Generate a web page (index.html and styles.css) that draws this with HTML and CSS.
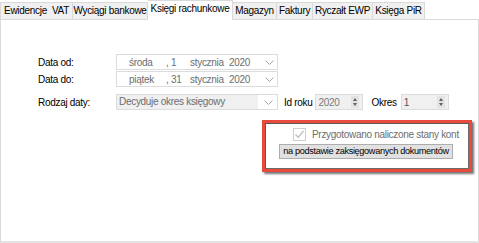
FILE: index.html
```html
<!DOCTYPE html>
<html lang="pl">

<head>
  <meta charset="UTF-8">
  <meta name="viewport" content="width=device-width, initial-scale=1.0">
  <title>Księgi rachunkowe</title>
  <link rel="stylesheet" href="styles.css">
</head>

<body>
  <div class="tabs">
    <div class="tab t1">Ewidencje&nbsp; VAT</div>
    <div class="tab t2">Wyciągi bankowe</div>
    <div class="tab active t3">Księgi rachunkowe</div>
    <div class="tab t4">Magazyn</div>
    <div class="tab t5">Faktury</div>
    <div class="tab t6">Ryczałt EWP</div>
    <div class="tab t7">Księga PiR</div>
  </div>

  <div class="panel">
    <div class="row">
      <span class="label">Data od:</span>
      <div class="date">
        <span class="wd">środa</span>
        <span class="dn">, 1</span>
        <span class="mn">stycznia</span>
        <span class="yr">2020</span>
        <svg class="chev" width="9" height="5" viewBox="0 0 9 5"><polyline points="0.5,0.5 4.5,4.5 8.5,0.5" fill="none" stroke="#a6a6a6" stroke-width="1"/></svg>
      </div>
    </div>
    <div class="row r2">
      <span class="label">Data do:</span>
      <div class="date">
        <span class="wd">piątek</span>
        <span class="dn">, 31</span>
        <span class="mn">stycznia</span>
        <span class="yr">2020</span>
        <svg class="chev" width="9" height="5" viewBox="0 0 9 5"><polyline points="0.5,0.5 4.5,4.5 8.5,0.5" fill="none" stroke="#a6a6a6" stroke-width="1"/></svg>
      </div>
    </div>
    <div class="row r3">
      <span class="label">Rodzaj daty:</span>
      <div class="select">
        <span class="sel-text">Decyduje okres księgowy</span>
        <svg class="chev" width="9" height="5" viewBox="0 0 9 5"><polyline points="0.5,0.5 4.5,4.5 8.5,0.5" fill="none" stroke="#a6a6a6" stroke-width="1"/></svg>
      </div>
      <span class="lbl-small">Id roku</span>
      <div class="spin s-year">
        <span class="val">2020</span>
        <span class="arrows"><i class="up"></i><i class="down"></i></span>
      </div>
      <span class="lbl-small okres">Okres</span>
      <div class="spin s-per">
        <span class="val">1</span>
        <span class="arrows"><i class="up"></i><i class="down"></i></span>
      </div>
    </div>

    <div class="mark">
      <div class="check-row">
        <span class="cb">
          <svg width="11" height="11" viewBox="0 0 11 11"><polyline points="1.5,5.5 4.2,8.3 9.5,2" fill="none" stroke="#bdbdbd" stroke-width="1.3"/></svg>
        </span>
        <span class="cb-text">Przygotowano naliczone stany kont</span>
      </div>
      <div class="btn">na podstawie zaksięgowanych dokumentów</div>
    </div>
  </div>
</body>

</html>
```

FILE: styles.css
```css
body {
  margin: 0;
  background: #fff;
  font-family: "Liberation Sans", Arial, sans-serif;
  font-size: 10px;
  letter-spacing: -0.3px;
  color: #000;
}

.tabs {
  display: flex;
  height: 19px;
  align-items: flex-end;
}

.tab {
  box-sizing: border-box;
  height: 17px;
  line-height: 15px;
  background: #f0f0f0;
  border: 1px solid #d9d9d9;
  border-bottom: none;
  border-left: none;
  text-align: center;
  white-space: nowrap;
}

.t1 { width: 73px; border-left: 1px solid #d9d9d9; }
.t2 { width: 75px; }
.t3 { width: 85px; }
.t4 { width: 44px; }
.t5 { width: 36px; }
.t6 { width: 60px; }
.t7 { width: 52px; }

.tab.active {
  height: 20px;
  margin-bottom: -1px;
  background: #fff;
  line-height: 16px;
  position: relative;
  z-index: 1;
}

.panel {
  box-sizing: border-box;
  height: 224px;
  width: 479px;
  border: 1px solid #dadada;
  border-bottom: 2px solid #e3e3e3;
  padding-top: 34px;
}

.row {
  display: flex;
  align-items: center;
  height: 16px;
}

.r2 {
  margin-top: 1px;
}

.r3 {
  margin-top: 7px;
}

.label {
  width: 78px;
  padding-left: 37px;
  color: #000;
}

.date {
  box-sizing: border-box;
  display: flex;
  align-items: center;
  width: 162px;
  height: 16px;
  border: 1px solid #dcdcdc;
  padding-left: 12px;
  color: #6d6d6d;
}

.wd { width: 37px; }
.dn { width: 24px; }
.mn { width: 39px; }
.yr { width: 36px; }

.chev {
  display: block;
}

.select {
  box-sizing: border-box;
  display: flex;
  align-items: center;
  width: 162px;
  height: 16px;
  border: 1px solid #dcdcdc;
  color: #6d6d6d;
}

.sel-text {
  box-sizing: border-box;
  width: 141px;
  height: 14px;
  line-height: 14px;
  padding-left: 2px;
  background: #f0f0f0;
  margin-right: 6px;
}

.lbl-small {
  margin-left: 6px;
  margin-right: 3px;
}

.okres {
  margin-left: 8px;
  margin-right: 4px;
}

.spin {
  box-sizing: border-box;
  display: flex;
  align-items: center;
  height: 16px;
  border: 1px solid #dcdcdc;
  background: #f0f0f0;
  color: #7a7a7a;
  padding-left: 2px;
}

.s-year {
  width: 48px;
}

.s-per {
  width: 48px;
  color: #555;
}

.val {
  flex: 1;
}

.arrows {
  display: flex;
  flex-direction: column;
  justify-content: center;
  align-items: center;
  gap: 2px;
  width: 8px;
  height: 12px;
  margin-right: 3px;
  background: #e3e3e3;
}

.arrows i {
  display: block;
  width: 0;
  height: 0;
  border-left: 2.5px solid transparent;
  border-right: 2.5px solid transparent;
}

.arrows .up {
  border-bottom: 3px solid #606060;
}

.arrows .down {
  border-top: 3px solid #606060;
}

.mark {
  box-sizing: border-box;
  width: 210px;
  height: 52px;
  margin-top: 10px;
  margin-left: 261px;
  border: 3px solid #ea4a3c;
  box-shadow: inset 1px 1px 0 #5a5a5a, inset -1px -1px 0 #6a6a6a, 2px 2px 2px rgba(0, 0, 0, 0.55);
  padding-top: 5px;
}

.check-row {
  display: flex;
  align-items: center;
  padding-left: 28px;
  height: 13px;
}

.cb {
  box-sizing: border-box;
  display: flex;
  align-items: center;
  justify-content: center;
  width: 13px;
  height: 13px;
  border: 1px solid #cfcfcf;
  margin-right: 6px;
}

.cb-text {
  color: #6d6d6d;
  white-space: nowrap;
}

.btn {
  box-sizing: border-box;
  width: 174px;
  height: 15px;
  margin-top: 3px;
  margin-left: 14px;
  background: #e1e1e1;
  border: 1px solid #adadad;
  font-size: 9.2px;
  letter-spacing: -0.35px;
  line-height: 13px;
  text-align: center;
  white-space: nowrap;
  color: #000;
}
```
